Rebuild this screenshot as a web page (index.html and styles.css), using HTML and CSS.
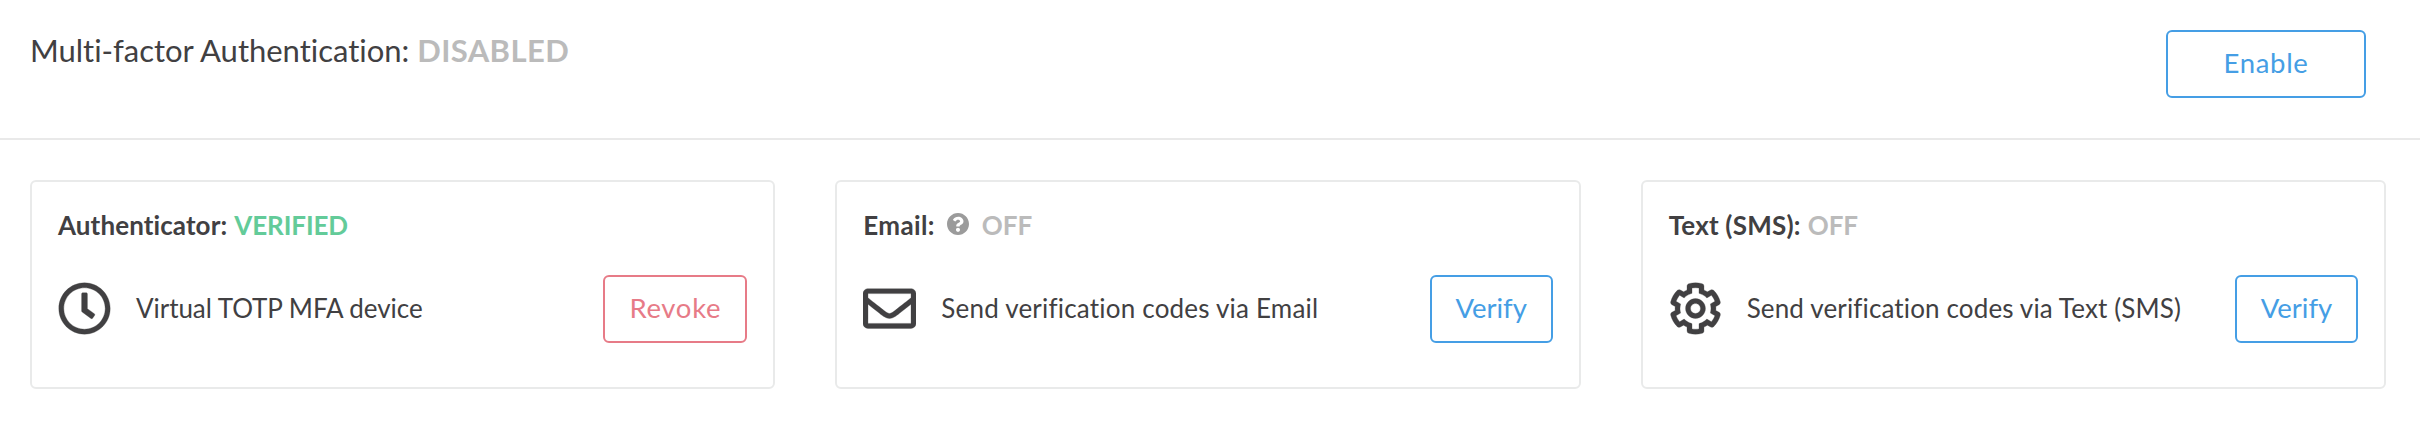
FILE: index.html
```html
<!DOCTYPE html>
<html lang="en">
<head>
<meta charset="utf-8">
<title>Multi-factor Authentication</title>
<link rel="stylesheet" href="styles.css">
</head>
<body>
<header class="mfa-header">
  <h1 class="mfa-title"><span class="title-label">Multi-factor Authentication:</span> <span class="title-status">DISABLED</span></h1>
  <button class="btn btn-enable">Enable</button>
</header>
<main class="cards">
  <section class="card">
    <h2 class="card-title"><span class="label-auth">Authenticator:</span><span class="status verified">VERIFIED</span></h2>
    <div class="card-row">
      <svg class="icon" viewBox="0 0 512 512"><path d="M256 8C119 8 8 119 8 256s111 248 248 248 248-111 248-248S393 8 256 8zm0 448c-110.500 0-200-89.500-200-200S145.500 56 256 56s200 89.500 200 200-89.500 200-200 200zm61.800-104.400l-84.900-61.700c-3.100-2.300-4.900-5.900-4.900-9.700V116c0-6.600 5.400-12 12-12h32c6.600 0 12 5.400 12 12v141.700l66.800 48.600c5.400 3.900 6.500 11.400 2.600 16.800L334.600 349c-3.900 5.300-11.400 6.500-16.800 2.600z"/></svg>
      <p class="desc desc-totp">Virtual TOTP MFA device</p>
      <button class="btn btn-revoke">Revoke</button>
    </div>
  </section>
  <section class="card">
    <h2 class="card-title"><span class="label-email">Email:</span><svg class="help" viewBox="8 8 496 496"><path d="M504 256c0 136.997-111.043 248-248 248S8 392.997 8 256C8 119.083 119.043 8 256 8s248 111.083 248 248zM262.655 90c-54.497 0-89.255 22.957-116.549 63.758-3.536 5.286-2.353 12.415 2.715 16.258l34.699 26.310c5.205 3.947 12.621 3.008 16.665-2.122 17.864-22.658 30.113-35.797 57.303-35.797 20.429 0 45.698 13.148 45.698 32.958 0 14.976-12.363 22.667-32.534 33.976C247.128 238.528 216 254.941 216 296v4c0 6.627 5.373 12 12 12h56c6.627 0 12-5.373 12-12v-1.333c0-28.462 83.186-29.647 83.186-106.667 0-58.002-60.165-102-116.531-102zM256 338c-25.365 0-46 20.635-46 46 0 25.364 20.635 46 46 46s46-20.636 46-46c0-25.364-20.635-46-46-46z"/></svg><span class="status off">OFF</span></h2>
    <div class="card-row">
      <svg class="icon" viewBox="0 0 512 512"><path d="M464 64H48C21.490 64 0 85.490 0 112v288c0 26.510 21.490 48 48 48h416c26.510 0 48-21.490 48-48V112c0-26.510-21.490-48-48-48zm0 48v40.805c-22.422 18.259-58.168 46.651-134.587 106.490-16.841 13.247-50.201 45.072-73.413 44.701-23.208.375-56.579-31.459-73.413-44.701C106.180 199.465 70.425 171.067 48 152.805V112h416zM48 400V214.398c22.914 18.251 55.409 43.862 104.938 82.646 21.857 17.205 60.134 55.186 103.062 54.955 42.717.231 80.509-37.199 103.053-54.947 49.528-38.783 82.032-64.401 104.947-82.653V400H48z"/></svg>
      <p class="desc desc-email">Send verification codes via Email</p>
      <button class="btn btn-verify">Verify</button>
    </div>
  </section>
  <section class="card">
    <h2 class="card-title"><span class="label-sms">Text (SMS):</span><span class="status off">OFF</span></h2>
    <div class="card-row">
      <svg class="icon" viewBox="0 0 512 512"><path d="M452.515 237l31.843-18.382c9.426-5.441 13.996-16.542 11.177-27.054-11.404-42.531-33.842-80.547-64.058-110.797-7.680-7.688-19.575-9.246-28.985-3.811l-31.785 18.358a196.276 196.276 0 0 0-32.899-19.020V39.541a24.016 24.016 0 0 0-17.842-23.206c-41.761-11.107-86.117-11.121-127.930-.001-10.519 2.798-17.844 12.321-17.844 23.206v36.753a196.276 196.276 0 0 0-32.899 19.020l-31.785-18.358c-9.410-5.435-21.305-3.877-28.985 3.811-30.216 30.250-52.654 68.265-64.058 110.797-2.819 10.512 1.751 21.613 11.177 27.054L59.485 237a197.715 197.715 0 0 0 0 37.999l-31.843 18.382c-9.426 5.441-13.996 16.542-11.177 27.054 11.404 42.531 33.842 80.547 64.058 110.797 7.680 7.688 19.575 9.246 28.985 3.811l31.785-18.358a196.202 196.202 0 0 0 32.899 19.019v36.753a24.016 24.016 0 0 0 17.842 23.206c41.761 11.107 86.117 11.122 127.930.001 10.519-2.798 17.844-12.321 17.844-23.206v-36.753a196.340 196.340 0 0 0 32.899-19.019l31.785 18.358c9.410 5.435 21.305 3.877 28.985-3.811 30.216-30.250 52.654-68.266 64.058-110.797 2.819-10.512-1.751-21.613-11.177-27.054L452.515 275c1.220-12.650 1.220-25.350 0-38zm-52.679 63.019l43.819 25.289a200.138 200.138 0 0 1-33.849 58.528l-43.829-25.309c-31.984 27.397-36.659 30.077-76.168 44.029v50.599a200.917 200.917 0 0 1-67.618 0v-50.599c-39.504-13.950-44.196-16.642-76.168-44.029l-43.829 25.309a200.150 200.150 0 0 1-33.849-58.528l43.819-25.289c-7.630-41.299-7.634-46.719 0-88.038l-43.819-25.289c7.850-21.229 19.310-41.049 33.849-58.529l43.829 25.309c31.984-27.397 36.660-30.078 76.168-44.029V58.845a200.917 200.917 0 0 1 67.618 0v50.599c39.504 13.950 44.196 16.642 76.168 44.029l43.829-25.309a200.143 200.143 0 0 1 33.849 58.529l-43.819 25.289c7.631 41.300 7.634 46.718 0 88.037zM256 160c-52.935 0-96 43.065-96 96s43.065 96 96 96 96-43.065 96-96-43.065-96-96-96zm0 144c-26.468 0-48-21.532-48-48 0-26.467 21.532-48 48-48s48 21.533 48 48c0 26.468-21.532 48-48 48z"/></svg>
      <p class="desc desc-sms">Send verification codes via Text (SMS)</p>
      <button class="btn btn-verify">Verify</button>
    </div>
  </section>
</main>
</body>
</html>
```
FILE: styles.css
```css
* { box-sizing: border-box; }
body {
  margin: 0;
  background: #fff;
  color: #414042;
  font-family: Lato, "Open Sans", sans-serif;
  font-variant-ligatures: none;
}
h1, h2, p { margin: 0; }
.mfa-header {
  display: flex;
  justify-content: space-between;
  align-items: flex-start;
  height: 140px;
  padding: 30px 54px 0 30px;
  border-bottom: 2px solid #e9e9e9;
}
.mfa-title {
  font-size: 31px;
  line-height: 40px;
  font-weight: 400;
  white-space: nowrap;
}
.title-label { letter-spacing: -0.02px; }
.title-status { color: #bbb; font-weight: 700; letter-spacing: 0.4px; }
.btn {
  flex: none;
  height: 68px;
  padding: 0 0 2px;
  border: 2px solid #459ee5;
  border-radius: 6px;
  background: #fff;
  color: #459ee5;
  font-family: inherit;
  font-size: 27.5px;
  line-height: 40px;
  text-align: center;
}
.btn-enable { width: 200px; letter-spacing: 0.7px; }
.btn-verify { width: 123px; }
.btn-revoke { width: 144px; border-color: #e77b87; color: #e77b87; letter-spacing: 0.7px; }
.cards {
  display: grid;
  grid-template-columns: repeat(3, 1fr);
  gap: 60px;
  padding: 40px 34px 0 30px;
}
.card {
  height: 209px;
  padding: 26px 26px 0;
  border: 2px solid #e9eaea;
  border-radius: 6px;
}
.card-title {
  display: flex;
  align-items: center;
  height: 34px;
  font-size: 26px;
  line-height: 34px;
  font-weight: 700;
  white-space: nowrap;
}
.label-auth { letter-spacing: 0.1px; }
.label-email { letter-spacing: 0.35px; }
.label-sms { letter-spacing: 0.2px; }
.status { margin-left: 7px; }
.verified { color: #63cb99; letter-spacing: -0.1px; }
.off { color: #bbb; }
.help { width: 22px; height: 22px; margin: 0 6px 3px 12px; fill: #9b9b9b; }
.card-row {
  display: flex;
  align-items: center;
  height: 68px;
  margin-top: 33px;
}
.icon {
  flex: none;
  width: 53px;
  height: 53px;
  margin-bottom: 2px;
  fill: #414042;
  stroke: #414042;
  stroke-width: 3;
}
.desc {
  flex: 1;
  margin-left: 25px;
  padding-bottom: 2px;
  font-size: 26px;
  line-height: 34px;
  white-space: nowrap;
}
.desc-totp { letter-spacing: -0.05px; }
.desc-email { letter-spacing: 0.2px; }
.desc-sms { letter-spacing: 0.14px; }
```
